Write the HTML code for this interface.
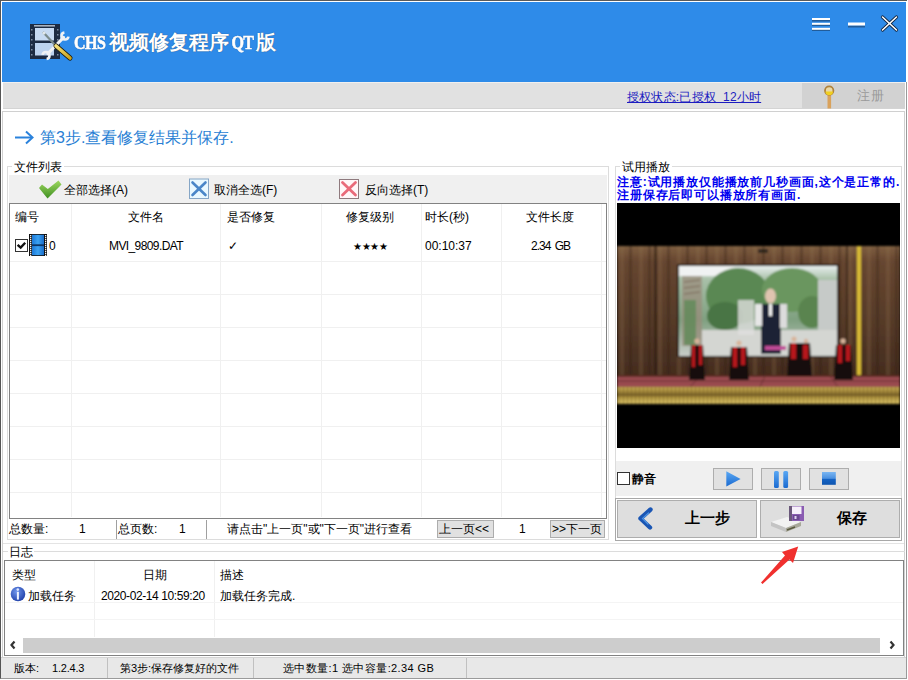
<!DOCTYPE html>
<html><head><meta charset="utf-8">
<style>
*{box-sizing:border-box;margin:0;padding:0}
html,body{width:908px;height:680px;overflow:hidden;background:#fff}
body{position:relative;font-family:"Liberation Sans",sans-serif;font-size:12px;color:#000}
.a{position:absolute}
.t{position:absolute;white-space:nowrap;line-height:14px}
.win{left:0;top:0;width:907px;height:679px;border-left:1px solid #555;border-top:1px solid #5a5a5a;border-bottom:1px solid #9a9a9a;background:#fff}
.hdr{left:2px;top:2px;width:904px;height:80px;background:#2e8be9}
.gbar{left:3px;top:82px;width:902px;height:27px;background:#e1e1e1;border-top:1px solid #f0f0f0;border-bottom:1px solid #d4d4d4}
.grp{border:1px solid #dcdcdc}
.tb{background:#f0f0f0}
.tbl{border:1px solid #828282;background:#fff}
.vl{position:absolute;width:1px;background:#f0f0f0}
.hl{position:absolute;height:1px;background:#f0f0f0}
.btn{position:absolute;background:#e1e1e1;border:1px solid #adadad}
</style></head><body>
<div class="a win"></div>
<div class="a hdr"></div>
<div class="a gbar"></div>
<div class="a" style="left:906px;top:82px;width:1px;height:597px;background:#9a9a9a"></div>
<!-- content left border -->
<div class="a" style="left:2px;top:111px;width:903px;height:546px;border:1px solid #d0d0d0;border-bottom:none"></div>

<!-- title -->
<div class="t" style="left:74px;top:31px;font-family:'Liberation Serif',serif;font-weight:bold;font-size:20px;line-height:22px;color:#fff;text-shadow:0 0 1px #1a3a60"><span style="font-size:16px;letter-spacing:-0.5px;display:inline-block;transform:scaleY(1.2);transform-origin:0 80%;margin-right:4px;-webkit-text-stroke:0.5px #fff">CHS</span>视频修复程序<span style="font-size:16px;letter-spacing:-0.5px;display:inline-block;transform:scaleY(1.2);transform-origin:0 80%;margin:0 2px;-webkit-text-stroke:0.5px #fff">QT</span>版</div>

<!-- step title -->
<div class="t" style="left:40px;top:128px;font-size:16px;line-height:20px;color:#2a7fd4;letter-spacing:0px">第3步.查看修复结果并保存.</div>

<!-- link -->
<div class="t" style="left:627px;top:90px;color:#1c1cc0;text-decoration:underline;letter-spacing:0.2px">授权状态:已授权&nbsp;&nbsp;12小时</div>
<div class="a" style="left:802px;top:83px;width:103px;height:25px;background:#d2d2d2"></div>
<div class="t" style="left:857px;top:88px;color:#9a9a9a;font-size:13px;line-height:15px;letter-spacing:0.5px">注册</div>

<!-- file list group -->
<div class="a grp" style="left:7px;top:166px;width:602px;height:374px"></div>
<div class="t" style="left:12px;top:160px;background:#fff;padding:0 2px">文件列表</div>
<div class="a tb" style="left:9px;top:175px;width:598px;height:28px"></div>
<div class="t" style="left:64px;top:183px">全部选择(A)</div>
<div class="t" style="left:214px;top:183px">取消全选(F)</div>
<div class="t" style="left:365px;top:183px">反向选择(T)</div>
<div class="a tbl" style="left:9px;top:203px;width:598px;height:316px"></div>
<div class="vl" style="left:71px;top:204px;height:313px"></div>
<div class="vl" style="left:220px;top:204px;height:313px"></div>
<div class="vl" style="left:321px;top:204px;height:313px"></div>
<div class="vl" style="left:421px;top:204px;height:313px"></div>
<div class="vl" style="left:501px;top:204px;height:313px"></div>
<div class="vl" style="left:601px;top:204px;height:313px"></div>
<div class="hl" style="left:10px;top:261px;width:596px"></div>
<div class="hl" style="left:10px;top:294px;width:596px"></div>
<div class="hl" style="left:10px;top:327px;width:596px"></div>
<div class="hl" style="left:10px;top:360px;width:596px"></div>
<div class="hl" style="left:10px;top:393px;width:596px"></div>
<div class="hl" style="left:10px;top:426px;width:596px"></div>
<div class="hl" style="left:10px;top:459px;width:596px"></div>
<div class="hl" style="left:10px;top:492px;width:596px"></div>
<div class="t" style="left:15px;top:210px">编号</div>
<div class="t" style="left:128px;top:210px">文件名</div>
<div class="t" style="left:227px;top:210px">是否修复</div>
<div class="t" style="left:346px;top:210px">修复级别</div>
<div class="t" style="left:425px;top:210px">时长(秒)</div>
<div class="t" style="left:526px;top:210px">文件长度</div>
<div class="t" style="left:49px;top:239px">0</div>
<div class="t" style="left:109px;top:239px" ><span style="letter-spacing:-0.6px">MVI_9809.DAT</span></div>
<div class="t" style="left:228px;top:239px">✓</div>
<div class="t" style="left:353px;top:239px"><span style="font-size:10px;letter-spacing:-0.3px">★★★★</span></div>
<div class="t" style="left:425px;top:239px">00:10:37</div>
<div class="t" style="left:531px;top:239px"><span style="letter-spacing:-1px;word-spacing:2px">2.34 GB</span></div>

<!-- pager -->
<div class="a" style="left:116px;top:520px;width:1px;height:19px;background:#a0a0a0"></div>
<div class="a" style="left:206px;top:520px;width:1px;height:19px;background:#a0a0a0"></div>
<div class="t" style="left:9px;top:522px">总数量:</div>
<div class="t" style="left:79px;top:522px">1</div>
<div class="t" style="left:118px;top:522px">总页数:</div>
<div class="t" style="left:179px;top:522px">1</div>
<div class="t" style="left:227px;top:522px">请点击"上一页"或"下一页"进行查看</div>
<div class="btn" style="left:437px;top:520px;width:57px;height:18px"></div>
<div class="t" style="left:439px;top:522px">上一页&lt;&lt;</div>
<div class="t" style="left:519px;top:522px">1</div>
<div class="btn" style="left:550px;top:520px;width:55px;height:18px"></div>
<div class="t" style="left:552px;top:522px">&gt;&gt;下一页</div>

<!-- right group -->
<div class="a grp" style="left:615px;top:166px;width:287px;height:375px"></div>
<div class="t" style="left:620px;top:160px;background:#fff;padding:0 2px">试用播放</div>
<div class="t" style="left:617px;top:176px;color:#0000f0;font-weight:bold;line-height:13px;letter-spacing:0.85px">注意:试用播放仅能播放前几秒画面,这个是正常的.<br>注册保存后即可以播放所有画面.</div>
<svg class="a" style="left:617px;top:203px" width="283" height="245" viewBox="617 203 283 245">
<defs>
<linearGradient id="gwall" x1="0" y1="0" x2="0" y2="1"><stop offset="0" stop-color="#7e5e40"/><stop offset=".12" stop-color="#664630"/><stop offset=".6" stop-color="#553a28"/><stop offset="1" stop-color="#442c1e"/></linearGradient>
<linearGradient id="gscr" x1="0" y1="0" x2="0" y2="1"><stop offset="0" stop-color="#e8eeee"/><stop offset=".15" stop-color="#a8c0a8"/><stop offset=".6" stop-color="#7fa080"/><stop offset="1" stop-color="#c8ccc8"/></linearGradient>
<linearGradient id="gfringe" x1="0" y1="0" x2="0" y2="1"><stop offset="0" stop-color="#a08436"/><stop offset=".3" stop-color="#d2ba5e"/><stop offset=".7" stop-color="#b09442"/><stop offset="1" stop-color="#6a5420"/></linearGradient>
<pattern id="pfr" width="4" height="18" patternUnits="userSpaceOnUse"><rect width="4" height="18" fill="url(#gfringe)"/><rect x="3" width="1" height="18" fill="#6a5422" opacity=".6"/></pattern>
<pattern id="pwall" x="617" y="246" width="19" height="129" patternUnits="userSpaceOnUse"><rect width="19" height="129" fill="url(#gwall)"/><rect x="3" width="4" height="129" fill="#94744e" opacity=".25"/><rect x="12" width="3" height="129" fill="#2e1c10" opacity=".3"/></pattern>
<filter id="fb" filterUnits="userSpaceOnUse" x="617" y="240" width="283" height="170"><feGaussianBlur stdDeviation="0.8"/></filter>
</defs>
<rect x="617" y="203" width="283" height="245" fill="#000"/>
<g filter="url(#fb)">
<rect x="617" y="246" width="283" height="129" fill="url(#pwall)"/>
<g fill="#2a1a10" opacity=".6"><rect x="654" y="246" width="3" height="129"/><rect x="846" y="246" width="2" height="129"/></g>
<rect x="758" y="249" width="10" height="4" fill="#181818" opacity=".7"/>
<rect x="677" y="264" width="162" height="93" fill="#2a1c12"/>
<rect x="679" y="266" width="158" height="90" fill="url(#gscr)"/>
<rect x="679" y="266" width="55" height="10" fill="#f0f2f2"/>
<rect x="682" y="276" width="20" height="70" fill="#9a8a7a" opacity=".7"/>
<g stroke="#6a5040" stroke-width="1" opacity=".7"><line x1="684" y1="282" x2="700" y2="280"/><line x1="684" y1="288" x2="700" y2="286"/><line x1="684" y1="294" x2="700" y2="292"/></g>
<rect x="684" y="300" width="12" height="45" fill="#5f8a58" opacity=".8"/>
<ellipse cx="738" cy="296" rx="32" ry="28" fill="#5a8852"/>
<ellipse cx="792" cy="290" rx="30" ry="22" fill="#6a965e"/>
<ellipse cx="725" cy="316" rx="18" ry="14" fill="#4a7444"/>
<ellipse cx="812" cy="312" rx="14" ry="16" fill="#5a8450"/>
<rect x="818" y="280" width="19" height="76" fill="#c6cac8"/>
<rect x="702" y="330" width="135" height="25" fill="#d4d6d2"/>
<rect x="738" y="300" width="16" height="35" fill="#dedede" opacity=".8"/>
<rect x="761" y="304" width="20" height="50" fill="#1e2436"/>
<rect x="755" y="304" width="7" height="22" fill="#e6e6e6"/>
<rect x="780" y="304" width="7" height="24" fill="#dcdcdc"/>
<rect x="769" y="304" width="3" height="12" fill="#f4f4f4"/>
<ellipse cx="770.5" cy="296" rx="5.5" ry="7.5" fill="#e0c4b0"/>
<rect x="765" y="346" width="21" height="4" fill="#c04c98"/>
<rect x="857" y="246" width="4" height="130" fill="#d8ba36"/>
<rect x="617" y="375" width="283" height="12" fill="#9a4c50"/>
<rect x="617" y="375" width="283" height="2" fill="#5a2a22"/>
<g stroke="#5e2a2a" stroke-width=".8"><line x1="700" y1="376" x2="690" y2="387"/><line x1="765" y1="376" x2="760" y2="387"/><line x1="830" y1="376" x2="838" y2="387"/><line x1="617" y1="381" x2="900" y2="381"/></g>
<rect x="617" y="387" width="283" height="17" fill="url(#pfr)"/>
<g fill="#141010"><path d="M691 345 L703 345 L705 380 L689 380 Z"/><path d="M731 347 L747 347 L749 380 L729 380 Z"/><path d="M789 343 L810 343 L812 376 L787 376 Z"/><path d="M836 345 L851 345 L853 380 L834 380 Z"/></g>
<g fill="#b8141c"><rect x="692" y="345" width="3" height="22"/><rect x="699" y="345" width="3" height="20"/><rect x="733" y="347" width="4" height="20"/><rect x="741" y="347" width="4" height="18"/><rect x="791" y="343" width="5" height="16"/><rect x="803" y="345" width="5" height="14"/><rect x="838" y="345" width="4" height="18"/><rect x="846" y="345" width="4" height="16"/></g>
<g fill="#d8b49a"><circle cx="697" cy="341" r="2.6"/><circle cx="739" cy="343" r="2.6"/><circle cx="794" cy="339" r="2.6"/><circle cx="843" cy="341" r="2.6"/><circle cx="806" cy="341" r="2.2"/></g>
</g>
</svg>
<div class="a tb" style="left:616px;top:461px;width:285px;height:35px"></div>
<div class="a" style="left:617px;top:472px;width:13px;height:13px;border:1px solid #333;background:#fff"></div>
<div class="t" style="left:632px;top:472px;font-weight:bold">静音</div>
<div class="btn" style="left:713px;top:468px;width:40px;height:22px"></div>
<div class="btn" style="left:761px;top:468px;width:40px;height:22px"></div>
<div class="btn" style="left:809px;top:468px;width:40px;height:22px"></div>
<div class="a" style="left:615px;top:498px;width:287px;height:43px;border:1px solid #a8a8a8"></div>
<div class="btn" style="left:617px;top:500px;width:140px;height:38px;background:#dedede"></div>
<div class="btn" style="left:760px;top:500px;width:140px;height:38px;background:#dedede"></div>
<div class="t" style="left:685px;top:510px;font-size:15px;line-height:16px;font-weight:bold">上一步</div>
<div class="t" style="left:837px;top:510px;font-size:15px;line-height:16px;font-weight:bold">保存</div>

<!-- log -->
<div class="a" style="left:3px;top:543px;width:901px;height:1px;background:#e4e4e4"></div>
<div class="a" style="left:3px;top:551px;width:902px;height:1px;background:#dcdcdc"></div>
<div class="t" style="left:8px;top:545px;background:#fff;padding:0 1px">日志</div>
<div class="a tbl" style="left:4px;top:560px;width:900px;height:96px"></div>
<div class="vl" style="left:94px;top:561px;height:76px"></div>
<div class="vl" style="left:214px;top:561px;height:76px"></div>
<div class="hl" style="left:5px;top:602px;width:898px;background:#f4f4f4"></div>
<div class="hl" style="left:5px;top:619px;width:898px;background:#f4f4f4"></div>
<div class="t" style="left:12px;top:568px">类型</div>
<div class="t" style="left:143px;top:568px">日期</div>
<div class="t" style="left:220px;top:568px">描述</div>
<div class="t" style="left:28px;top:589px">加载任务</div>
<div class="t" style="left:101px;top:589px"><span style="letter-spacing:-0.4px">2020-02-14 10:59:20</span></div>
<div class="t" style="left:220px;top:589px">加载任务完成.</div>
<div class="a" style="left:23px;top:638px;width:857px;height:15px;background:#cdcdcd"></div>

<!-- status bar -->
<div class="a" style="left:1px;top:657px;width:905px;height:21px;background:#e8e8e8;border-top:1px solid #d4d4d4"></div>
<div class="t" style="left:14px;top:661px;font-size:11px">版本:</div>
<div class="t" style="left:52px;top:661px;font-size:11px;letter-spacing:-0.2px">1.2.4.3</div>
<div class="a" style="left:107px;top:658px;width:1px;height:20px;background:#c0c0c0"></div>
<div class="t" style="left:120px;top:661px;font-size:11px">第3步:保存修复好的文件</div>
<div class="a" style="left:253px;top:658px;width:1px;height:20px;background:#c0c0c0"></div>
<div class="t" style="left:283px;top:661px;font-size:11px;letter-spacing:0.4px">选中数量:1 选中容量:2.34 GB</div>
<div class="a" style="left:466px;top:658px;width:1px;height:20px;background:#c0c0c0"></div>

<svg class="a" style="left:0;top:0" width="908" height="680" viewBox="0 0 908 680">
<defs>
<linearGradient id="gyel" x1="0" y1="0" x2="1" y2="1"><stop offset="0" stop-color="#f6e27a"/><stop offset="1" stop-color="#c9a21c"/></linearGradient>
<linearGradient id="ggrn" x1="0" y1="0" x2="0" y2="1"><stop offset="0" stop-color="#9ed860"/><stop offset="1" stop-color="#3f8f22"/></linearGradient>
<linearGradient id="gblu" x1="0" y1="0" x2="0" y2="1"><stop offset="0" stop-color="#5aa8f4"/><stop offset="1" stop-color="#1a6ad0"/></linearGradient>
<linearGradient id="gstop" x1="0" y1="0" x2="0" y2="1"><stop offset="0" stop-color="#7ab6f2"/><stop offset=".5" stop-color="#4a90e0"/><stop offset=".55" stop-color="#1462c4"/><stop offset="1" stop-color="#0f56b0"/></linearGradient>
<linearGradient id="gfilm" x1="0" y1="0" x2="1" y2="0"><stop offset="0" stop-color="#1c78d8"/><stop offset=".5" stop-color="#3aa2f2"/><stop offset="1" stop-color="#1a6cc8"/></linearGradient>
<radialGradient id="ginfo" cx=".4" cy=".35" r=".7"><stop offset="0" stop-color="#6f95ec"/><stop offset="1" stop-color="#1f3fa8"/></radialGradient>
</defs>
<!-- logo film strip -->
<rect x="30" y="24" width="30" height="35" fill="#1d2b42"/>
<rect x="35" y="28" width="19" height="12.5" fill="#c7daf2"/>
<rect x="35" y="43" width="19" height="12.5" fill="#bcd2ee"/>
<rect x="34" y="25" width="21" height="1.6" fill="#a9b3c0"/>
<g fill="#7f8ea3"><rect x="31" y="29" width="1.5" height="1.5"/><rect x="31" y="34" width="1.5" height="1.5"/><rect x="31" y="39" width="1.5" height="1.5"/><rect x="31" y="44" width="1.5" height="1.5"/><rect x="31" y="49" width="1.5" height="1.5"/><rect x="31" y="54" width="1.5" height="1.5"/>
<rect x="57" y="29" width="1.5" height="1.5"/><rect x="57" y="34" width="1.5" height="1.5"/><rect x="57" y="39" width="1.5" height="1.5"/><rect x="57" y="44" width="1.5" height="1.5"/><rect x="57" y="49" width="1.5" height="1.5"/><rect x="57" y="54" width="1.5" height="1.5"/></g>
<!-- wrench -->
<path d="M48 53.5 L63.5 37.5" stroke="#f0f2f4" stroke-width="3.2" stroke-linecap="round"/>
<path d="M64.4 32.55 A3.5 3.5 0 1 0 68.45 36.6" stroke="#f0f2f4" stroke-width="2.6" fill="none"/>
<path d="M42.55 54.9 A3.5 3.5 0 1 1 46.6 58.95" stroke="#f0f2f4" stroke-width="2.6" fill="none"/>
<!-- screwdriver -->
<line x1="43" y1="32" x2="56" y2="46" stroke="#7b8b8c" stroke-width="2.2"/>
<circle cx="44" cy="33" r="1.6" fill="#dfe6ea"/>
<line x1="56" y1="46" x2="70" y2="58" stroke="#1c1c10" stroke-width="5" stroke-linecap="round"/>
<line x1="56" y1="46" x2="70" y2="58" stroke="url(#gyel)" stroke-width="3.6" stroke-linecap="round"/>
<!-- window controls -->
<g stroke="#1a3d66" stroke-width="2" opacity=".6"><line x1="812" y1="20.5" x2="830" y2="20.5"/><line x1="812" y1="25" x2="830" y2="25"/><line x1="812" y1="30" x2="830" y2="30"/><line x1="848" y1="26.5" x2="865" y2="26.5"/></g>
<g stroke="#fff" stroke-width="2"><line x1="812" y1="19" x2="830" y2="19"/><line x1="812" y1="23.8" x2="830" y2="23.8"/><line x1="812" y1="28.8" x2="830" y2="28.8"/></g>
<rect x="848" y="22.5" width="17" height="3" fill="#fff"/>
<g stroke="#10243f" stroke-width="3.2" stroke-linecap="round"><line x1="882.5" y1="17" x2="896.5" y2="30"/><line x1="896.5" y1="17" x2="882.5" y2="30"/></g>
<g stroke="#fff" stroke-width="1.6" stroke-linecap="round"><line x1="882.5" y1="17" x2="896.5" y2="30"/><line x1="896.5" y1="17" x2="882.5" y2="30"/></g>
<!-- key -->
<rect x="827.5" y="95" width="3.6" height="13.5" fill="#d9a25c"/>
<circle cx="829.2" cy="90.6" r="4.2" fill="#e9d9a8" stroke="#b0823a" stroke-width="1.8"/><path d="M825.5 91.5 A3.7 3.7 0 0 0 833 91.5 Z" fill="#f0d020"/>
<!-- step arrow -->
<g stroke="#2a82dc" stroke-width="2" fill="none"><line x1="15" y1="137.5" x2="32" y2="137.5"/><polyline points="26,131.5 32.5,137.5 26,143.5"/></g>
<!-- toolbar icons -->
<polygon points="39,188 42,184.5 47.8,189 58.5,180.5 61.5,184.5 47.5,198.5" fill="url(#ggrn)"/>
<rect x="189.5" y="179" width="19" height="19.5" fill="#e9f8ff" stroke="#86a6c6"/>
<g stroke="#4a86c8" stroke-width="2.6" stroke-linecap="round"><line x1="192.5" y1="182.5" x2="205.5" y2="195"/><line x1="205.5" y1="182.5" x2="192.5" y2="195"/></g>
<rect x="339.5" y="179.5" width="19" height="19" fill="#fff6f8" stroke="#8f7a7e"/>
<g stroke="#e96a7a" stroke-width="2.8" stroke-linecap="round"><line x1="342.5" y1="182.5" x2="355.5" y2="195"/><line x1="355.5" y1="182.5" x2="342.5" y2="195"/></g>
<!-- row checkbox + film -->
<rect x="15.5" y="239.5" width="12" height="12" fill="#fff" stroke="#333"/>
<polyline points="17.6,244.8 20.7,247.6 25.2,242.8" stroke="#111" stroke-width="2.4" fill="none"/>
<rect x="29" y="234" width="18" height="22" fill="#111"/>
<rect x="32" y="234.8" width="12" height="20.4" fill="url(#gfilm)"/>
<rect x="32" y="244.3" width="12" height="1.8" fill="#0b3566"/>
<g fill="#f4f4f4"><rect x="30" y="235" width="1.3" height="1.3"/><rect x="45" y="235" width="1.3" height="1.3"/><rect x="30" y="237" width="1.3" height="1.3"/><rect x="45" y="237" width="1.3" height="1.3"/><rect x="30" y="239" width="1.3" height="1.3"/><rect x="45" y="239" width="1.3" height="1.3"/><rect x="30" y="241" width="1.3" height="1.3"/><rect x="45" y="241" width="1.3" height="1.3"/><rect x="30" y="243" width="1.3" height="1.3"/><rect x="45" y="243" width="1.3" height="1.3"/><rect x="30" y="245" width="1.3" height="1.3"/><rect x="45" y="245" width="1.3" height="1.3"/><rect x="30" y="247" width="1.3" height="1.3"/><rect x="45" y="247" width="1.3" height="1.3"/><rect x="30" y="249" width="1.3" height="1.3"/><rect x="45" y="249" width="1.3" height="1.3"/><rect x="30" y="251" width="1.3" height="1.3"/><rect x="45" y="251" width="1.3" height="1.3"/><rect x="30" y="253" width="1.3" height="1.3"/><rect x="45" y="253" width="1.3" height="1.3"/><rect x="30" y="255" width="1.3" height="1.3"/><rect x="45" y="255" width="1.3" height="1.3"/></g>
<!-- media buttons icons -->
<polygon points="726.3,471.3 740.6,479 726.3,486.5" fill="url(#gblu)"/>
<rect x="774" y="471" width="4.8" height="17" rx="1.5" fill="url(#gblu)"/>
<rect x="783.3" y="471" width="4.8" height="17" rx="1.5" fill="url(#gblu)"/>
<rect x="822" y="472" width="13.8" height="12.8" fill="url(#gstop)"/>
<!-- chevron -->
<polyline points="650.5,509.5 640.5,518.5 650,527.5" stroke="#1a56b4" stroke-width="4.4" fill="none" stroke-linecap="round" stroke-linejoin="round"/>
<polyline points="648.5,513 642.5,518.5 648,524" stroke="#5aa2ee" stroke-width="1.2" fill="none" stroke-linecap="round" opacity=".8"/>
<!-- floppy -->
<polygon points="771,522 787,517 801,522 786,528" fill="#f2f2f2"/>
<polygon points="771,522 786,528 786,532 771,526" fill="#c4c4c4"/>
<polygon points="786,528 801,522 801,526 786,532" fill="#a8a89a"/>
<line x1="787" y1="530" x2="795" y2="527" stroke="#5a5a40" stroke-width="1.5"/>
<rect x="789" y="506" width="15" height="15" fill="#8a5cb2"/><rect x="789" y="506" width="3" height="15" fill="#6a587a"/>
<rect x="792" y="506.5" width="9.5" height="7.5" fill="#f6f0fa"/>
<rect x="793" y="515" width="6.5" height="5" fill="#6a4890"/>
<rect x="794.5" y="516" width="2" height="3" fill="#e0d0f0"/>
<!-- red arrow -->
<polygon points="798.2,546.5 793,563 789.5,559.5 762.5,584 761,582.5 785,555.5 782,552" fill="#f0302e"/>
<!-- info icon -->
<circle cx="18" cy="594" r="7.3" fill="url(#ginfo)"/>
<circle cx="17.8" cy="589.6" r="1.3" fill="#dfe8ff"/>
<rect x="16.9" y="591.8" width="2" height="7.8" fill="#eef3ff"/>
<!-- scrollbar arrows -->
<polyline points="14.5,641.5 11.5,645 14.5,648.5" stroke="#333" stroke-width="2.2" fill="none"/>
<polyline points="890.5,641.5 893.5,645 890.5,648.5" stroke="#333" stroke-width="2.2" fill="none"/>
</svg>
</body></html>
